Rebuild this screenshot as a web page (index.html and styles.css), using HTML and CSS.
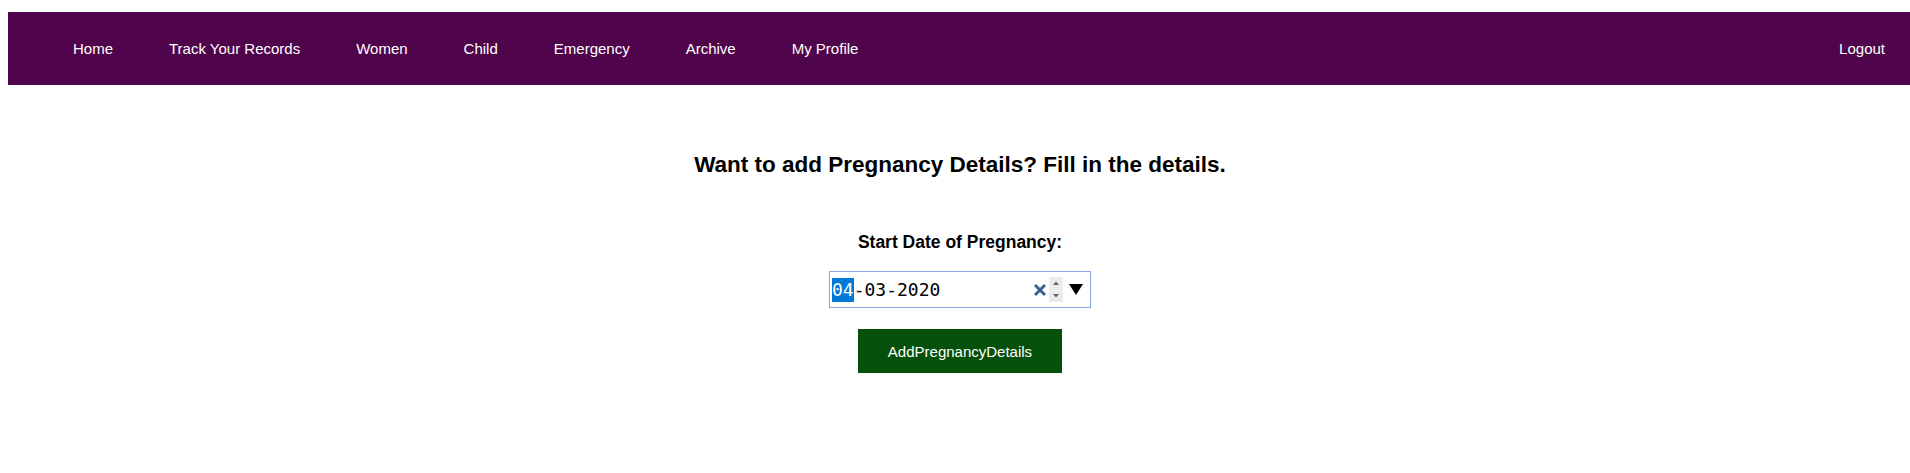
FILE: index.html
```html
<!DOCTYPE html>
<html lang="en">
<head>
<meta charset="utf-8">
<title>Add Pregnancy Details</title>
<link rel="stylesheet" href="styles.css">
</head>
<body>
<nav class="navbar">
  <ul class="nav-links">
    <li><a href="#">Home</a></li>
    <li><a href="#">Track Your Records</a></li>
    <li><a href="#">Women</a></li>
    <li><a href="#">Child</a></li>
    <li><a href="#">Emergency</a></li>
    <li><a href="#">Archive</a></li>
    <li><a href="#">My Profile</a></li>
  </ul>
  <a class="logout" href="#">Logout</a>
</nav>
<main class="content">
  <h3 class="title">Want to add Pregnancy Details? Fill in the details.</h3>
  <form class="form">
    <label class="label">Start Date of Pregnancy:</label>
    <div class="date-input">
      <span class="date-text"><span class="sel">04</span>-03-2020</span>
      <span class="spacer"></span>
      <svg class="clear" width="14" height="14" viewBox="0 0 14 14"><path d="M2 2 L12 12 M12 2 L2 12" stroke="#3f5f98" stroke-width="3" stroke-linecap="butt"/></svg>
      <span class="spin">
        <svg width="14" height="25" viewBox="0 0 14 25"><path d="M4 8 L7 4.5 L10 8 Z" fill="#666"/><path d="M4 17 L7 20.5 L10 17 Z" fill="#666"/></svg>
      </span>
      <svg class="drop" width="14" height="11" viewBox="0 0 14 11"><path d="M0 0 L14 0 L7 11 Z" fill="#000"/></svg>
    </div>
    <button type="button" class="submit">AddPregnancyDetails</button>
  </form>
</main>
</body>
</html>
```
FILE: styles.css
```css
html, body {
  margin: 0;
  padding: 0;
  background: #ffffff;
}
body {
  font-family: "Liberation Sans", Arial, sans-serif;
  overflow: hidden;
}
.navbar {
  margin: 12px 0 0 8px;
  height: 73px;
  background: #50044b;
  display: flex;
  align-items: center;
  padding: 0 25px 0 65px;
}
.nav-links {
  list-style: none;
  margin: 0;
  padding: 0;
  display: flex;
  gap: 56px;
  flex: 1;
}
.nav-links a, .logout {
  color: #ffffff;
  text-decoration: none;
  font-size: 15px;
  line-height: 18px;
}
.content {
  display: flex;
  flex-direction: column;
  align-items: center;
  padding-left: 10px;
}
.title {
  margin: 67px 0 0 0;
  font-size: 22.5px;
  line-height: 26px;
  font-weight: bold;
  color: #000;
}
.form {
  display: flex;
  flex-direction: column;
  align-items: center;
  margin-top: 54px;
}
.label {
  font-size: 17.5px;
  line-height: 20px;
  font-weight: bold;
  color: #000;
}
.date-input {
  margin-top: 19px;
  width: 262px;
  height: 37px;
  box-sizing: border-box;
  border: 1px solid #86a8e6;
  display: flex;
  align-items: center;
  padding: 0 7px 0 2px;
  background: #fff;
}
.date-text {
  font-family: "DejaVu Sans Mono", "Liberation Mono", monospace;
  font-size: 18px;
  line-height: 24px;
  color: #000;
  letter-spacing: 0;
}
.sel {
  background: #0078d7;
  color: #fff;
  display: inline-block;
}
.spacer {
  flex: 1;
}
.clear {
  display: block;
  margin-right: 2px;
}
.spin {
  display: block;
  width: 14px;
  height: 25px;
  background: #ececec;
  margin-right: 6px;
}
.spin svg {
  display: block;
}
.drop {
  display: block;
}
.submit {
  margin-top: 21px;
  width: 204px;
  height: 44px;
  border: none;
  background: #05500a;
  color: #ffffff;
  font-family: "Liberation Sans", Arial, sans-serif;
  font-size: 15px;
  padding: 0;
  cursor: pointer;
}
```
